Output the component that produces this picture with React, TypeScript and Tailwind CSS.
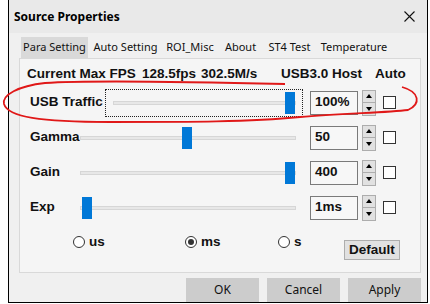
import React from 'react';

const ui = { fontFamily: '"Noto Sans", "Open Sans", sans-serif' };
const bold = { fontFamily: '"Liberation Sans", Arial, sans-serif' };

const tabs = [
  { label: 'Para Setting', w: 'w-[67px]', active: true },
  { label: 'Auto Setting', w: 'w-[75px]' },
  { label: 'ROI_Misc', w: 'w-[54px]' },
  { label: 'About', w: 'w-[47px]' },
  { label: 'ST4 Test', w: 'w-[51px]' },
  { label: 'Temperature', w: 'w-[78px]' },
];

function Slider({ frac, focused }: { frac: number; focused?: boolean }) {
  return (
    <div
      className={
        focused
          ? 'w-[198px] h-[28px] flex items-center pl-[7px] pr-[6px] border border-dotted border-[#222]'
          : 'w-[227px] h-[28px] flex items-center pl-[4px] pr-[7px]'
      }
    >
      <div className="relative flex-1 h-[4px] bg-[#e7e7e7] border border-[#d6d6d6]">
        <div
          className="absolute top-[-10px] w-[10px] h-[22px] bg-[#0078d7]"
          style={{ left: `calc(${frac} * (100% - 10px))` }}
        />
      </div>
    </div>
  );
}

function Spinner() {
  return (
    <div className="w-[14px] h-[26px] flex flex-col border border-[#adadad] bg-[#e1e1e1]">
      <div className="flex-1 flex items-center justify-center border-b border-[#adadad]">
        <div className="w-0 h-0 border-l-[3px] border-r-[3px] border-b-[4px] border-l-transparent border-r-transparent border-b-black" />
      </div>
      <div className="flex-1 flex items-center justify-center">
        <div className="w-0 h-0 border-l-[3px] border-r-[3px] border-t-[4px] border-l-transparent border-r-transparent border-t-black" />
      </div>
    </div>
  );
}

function Row({ label, labelW, value, frac, focused }: { label: string; labelW: string; value: string; frac: number; focused?: boolean }) {
  return (
    <div className="h-[35px] flex items-center pl-[10px]">
      <span className={`${labelW} text-[13.5px] font-bold text-[#111]`} style={bold}>
        {label}
      </span>
      <Slider frac={frac} focused={focused} />
      <div
        className="ml-[7px] w-[48px] h-[24px] flex items-center pl-[4px] border border-[#7a7a7a] bg-[#f7f7f7] text-[13.5px] font-bold text-[#111]"
        style={bold}
      >
        {value}
      </div>
      <div className="ml-[4px]">
        <Spinner />
      </div>
      <div className="ml-[7px] w-[13px] h-[13px] border border-[#333] bg-white" />
    </div>
  );
}

function Radio({ label, checked, w }: { label: string; checked?: boolean; w: string }) {
  return (
    <div className={`${w} flex items-center`}>
      <div className="w-[12px] h-[12px] rounded-full border border-[#333] bg-white flex items-center justify-center">
        {checked && <div className="w-[6px] h-[6px] rounded-full bg-[#333]" />}
      </div>
      <span className="ml-[4px] text-[13.5px] font-bold text-[#111]" style={bold}>
        {label}
      </span>
    </div>
  );
}

export default function App() {
  return (
    <div className="relative w-[430px] h-[304px] bg-white">
      <div className="ml-[8px] w-[420px] h-[303px] flex flex-col bg-[#f0f0f0] border-l border-r border-b border-black">
        {/* title bar */}
        <div className="h-[33px] flex items-center justify-between pl-[5px] pr-[12px] bg-[#e9e9e9]">
          <span className="text-[12px] font-bold text-black" style={ui}>
            Source Properties
          </span>
          <svg width="11" height="11" viewBox="0 0 11 11">
            <path d="M0.5 0.5 L10.5 10.5 M10.5 0.5 L0.5 10.5" stroke="#111" strokeWidth="1.1" />
          </svg>
        </div>

        {/* tabs */}
        <div className="mt-[4px] h-[21px] flex pl-[12px]">
          {tabs.map(t => (
            <div
              key={t.label}
              className={`${t.w} flex items-center justify-center text-[11px] text-[#111] ${t.active ? 'bg-[#d9d9d9]' : ''}`}
              style={ui}
            >
              {t.label}
            </div>
          ))}
        </div>

        {/* tab page */}
        <div className="ml-[10px] w-[402px] h-[215px] flex flex-col border border-[#d9d9d9] bg-[#f5f5f5]">
          <div className="h-[26px] flex items-end pb-[1px] pl-[7px] text-[13.5px] font-bold text-[#111]" style={bold}>
            <span className="w-[115px]">Current Max FPS</span>
            <span className="w-[59px]">128.5fps</span>
            <span className="w-[80px]">302.5M/s</span>
            <span className="w-[94px]">USB3.0 Host</span>
            <span>Auto</span>
          </div>
          <Row label="USB Traffic" labelW="w-[75px]" value="100%" frac={1} focused />
          <Row label="Gamma" labelW="w-[46px]" value="50" frac={0.495} />
          <Row label="Gain" labelW="w-[46px]" value="400" frac={1} />
          <Row label="Exp" labelW="w-[46px]" value="1ms" frac={0.005} />
          <div className="flex items-start pl-[53px] pt-[7px]">
            <Radio label="us" w="w-[112px]" />
            <Radio label="ms" checked w="w-[93px]" />
            <Radio label="s" w="w-[66px]" />
            <div
              className="mt-[8px] w-[56px] h-[20px] flex items-center justify-center border border-[#adadad] bg-[#e1e1e1] text-[13.5px] font-bold text-[#111]"
              style={bold}
            >
              Default
            </div>
          </div>
        </div>

        {/* buttons */}
        <div className="mt-[5px] flex justify-end gap-[8px] pr-[6px]">
          {['OK', 'Cancel', 'Apply'].map(b => (
            <div
              key={b}
              className="w-[73px] h-[24px] flex items-center justify-center bg-[#cccccc] text-[12px] text-[#111]"
              style={ui}
            >
              {b}
            </div>
          ))}
        </div>
      </div>

      {/* red annotation */}
      <svg className="absolute left-0 top-0 pointer-events-none" width="430" height="304">
        <path
          d="M285 84 C200 82 90 80 45 83 C18 86 2 95 4 104 C8 117 40 122 110 122 C190 122 250 122 300 117 C340 113 385 113 408 110 C421 104 420 92 402 87"
          fill="none"
          stroke="#e01818"
          strokeWidth="1.8"
        />
      </svg>
    </div>
  );
}
